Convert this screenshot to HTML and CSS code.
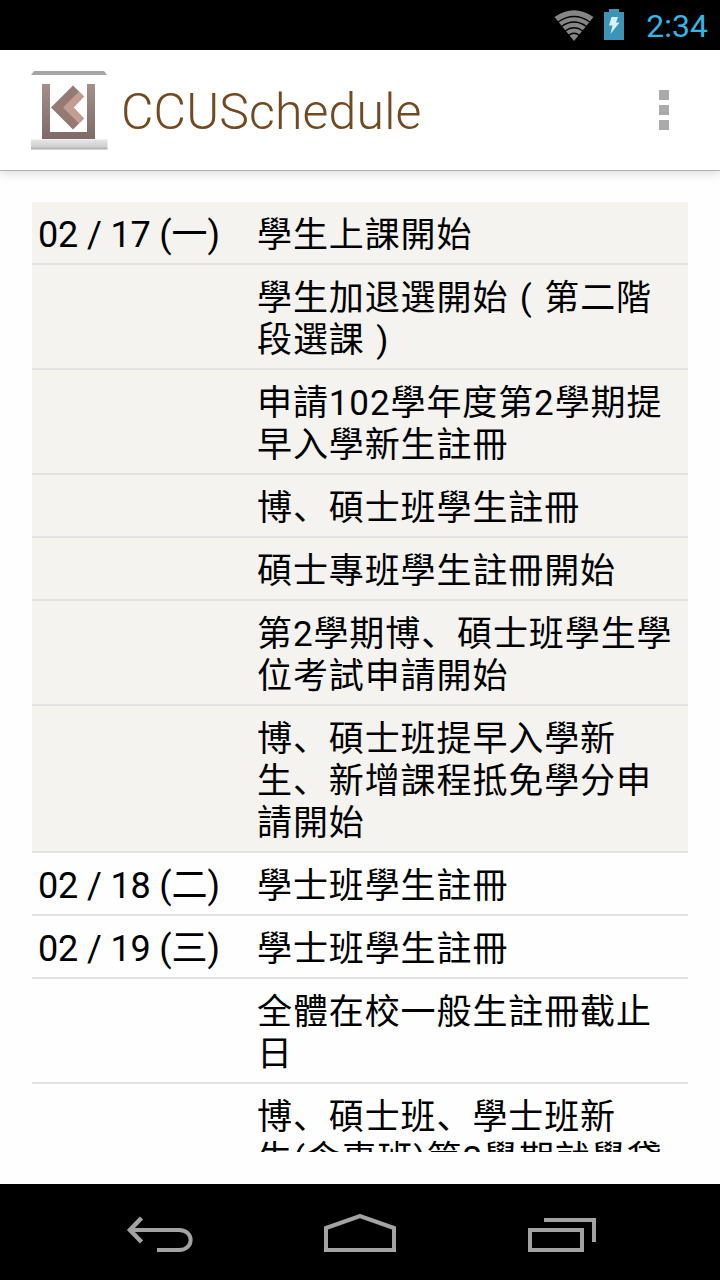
FILE: index.html
```html
<!DOCTYPE html>
<html lang="zh-Hans">
<head>
    <meta charset="UTF-8">
    <meta name="viewport" content="width=device-width, initial-scale=1.0">
    <title>CCUSchedule</title>
    <link rel="stylesheet" href="styles.css">
</head>
<body>
    <div class="status-bar">
        <svg class="wifi" width="40" height="31" viewBox="0 0 40 31">
            <path d="M0.5 7 Q20 -6.500 39.500 7 L20 31 Z" fill="#858585"/>
            <g fill="none" stroke="#000" stroke-width="1.300">
                <path d="M4 12 Q20 1 36 12"/>
                <path d="M7.500 16.500 Q20 7.500 32.500 16.500"/>
                <path d="M11 21 Q20 14.500 29 21"/>
                <path d="M14.500 25.500 Q20 21 25.500 25.500"/>
            </g>
        </svg>
        <svg class="battery" width="20" height="31" viewBox="0 0 20 31">
            <path d="M5 0h10v3h5v28H0V3h5z" fill="#3d94b5"/>
            <path d="M7.500 8h6.500l-2 5.500h3.500L6.500 25l2-8.500H5z" fill="#d5f2fc"/>
        </svg>
        <span class="clock">2:34</span>
    </div>

    <header class="action-bar">
        <svg class="logo" width="80" height="80" viewBox="0 0 80 80">
            <defs>
                <linearGradient id="frame" x1="0" y1="0" x2="0" y2="1">
                    <stop offset="0" stop-color="#a48f89"/>
                    <stop offset="1" stop-color="#806a65"/>
                </linearGradient>
                <linearGradient id="base" x1="0" y1="0" x2="0" y2="1">
                    <stop offset="0" stop-color="#e6e6e6"/>
                    <stop offset="0.700" stop-color="#d0d0d0"/>
                    <stop offset="1" stop-color="#a9a9a9"/>
                </linearGradient>
            </defs>
            <path d="M4 1h70l3 4H1z" fill="#a5a5a5"/>
            <path d="M12 14h8v48h37V14h8v55H12z" fill="url(#frame)"/>
            <path d="M43 15.500 54 26.500 43.500 37.500 54 48.500 43 59.500 21 37.500z" fill="#957a73"/>
            <path d="M49 21.500 54 26.500 43.500 37.500 54 48.500 49 53.500 33 37.500z" fill="#c39d91"/>
            <path d="M1 69.500h76.500v10H1z" fill="url(#base)"/>
        </svg>
        <h1>CCUSchedule</h1>
        <button class="menu"><i></i><i></i><i></i></button>
    </header>

    <main class="content">
        <div class="schedule">
            <div class="row shaded"><span class="date">02 / 17 (一)</span><p>學生上課開始</p></div>
            <div class="row shaded"><span class="date"></span><p>學生加退選開始<span class="paren">(</span>第二階<br>段選課<span class="paren">)</span></p></div>
            <div class="row shaded"><span class="date"></span><p>申請102學年度第2學期提<br>早入學新生註冊</p></div>
            <div class="row shaded"><span class="date"></span><p>博、碩士班學生註冊</p></div>
            <div class="row shaded"><span class="date"></span><p>碩士專班學生註冊開始</p></div>
            <div class="row shaded"><span class="date"></span><p>第2學期博、碩士班學生學<br>位考試申請開始</p></div>
            <div class="row shaded"><span class="date"></span><p>博、碩士班提早入學新<br>生、新增課程抵免學分申<br>請開始</p></div>
            <div class="row"><span class="date">02 / 18 (二)</span><p>學士班學生註冊</p></div>
            <div class="row"><span class="date">02 / 19 (三)</span><p>學士班學生註冊</p></div>
            <div class="row"><span class="date"></span><p>全體在校一般生註冊截止<br>日</p></div>
            <div class="row"><span class="date"></span><p>博、碩士班、學士班新<br>生(含專班)第2學期就學貸</p></div>
        </div>
    </main>

    <nav class="nav-bar">
        <svg width="68" height="36" viewBox="0 0 68 36" fill="none" stroke="#a3a3a3" stroke-width="4">
            <path d="M15.500 2 4 14 15.500 26" stroke-width="4.500"/>
            <path d="M5 14H53C68.500 14 68.500 34 53 34H31"/>
        </svg>
        <svg width="72" height="38" viewBox="0 0 72 38" fill="none" stroke="#a3a3a3" stroke-width="4">
            <path d="M2 36V14L36 2 70 14V36Z"/>
        </svg>
        <svg width="68" height="34" viewBox="0 0 68 34" fill="none" stroke="#a3a3a3" stroke-width="4">
            <path d="M2 12H54V32H2Z"/>
            <path d="M16 2H66V24"/>
        </svg>
    </nav>
</body>
</html>
```

FILE: styles.css
```css
* {
    box-sizing: border-box;
}
body {
    margin: 0;
    width: 720px;
    height: 1280px;
    display: flex;
    flex-direction: column;
    overflow: hidden;
    background-color: #fefefe;
    color: #000;
    font-family: Roboto, "Noto Sans CJK SC", sans-serif;
}
.status-bar {
    height: 50px;
    display: flex;
    align-items: center;
    justify-content: flex-end;
    padding-right: 12px;
    background-color: #000;
}
.wifi {
    margin-right: 1px;
}
.battery {
    margin: 0 22px 2px 9px;
}
.clock {
    font-size: 32px;
    line-height: 50px;
    color: #33b5e5;
    padding-top: 2px;
}
.action-bar {
    height: 121px;
    display: flex;
    align-items: center;
    padding: 0 51px 0 30px;
    background-color: #fff;
    border-bottom: 1px solid #b0b0b0;
    box-shadow: 0 2px 10px rgba(0, 0, 0, 0.15);
}
.action-bar h1 {
    margin: 0 auto 0 11px;
    padding-top: 3px;
    font-size: 50px;
    font-weight: 300;
    letter-spacing: 0.15px;
    color: #73491f;
}
.menu {
    display: flex;
    flex-direction: column;
    gap: 5px;
    padding: 0;
    border: none;
    background: none;
}
.menu i {
    width: 10px;
    height: 10px;
    background-color: #aaa;
}
.content {
    height: 1013px;
    padding: 31px 32px 32px;
}
.schedule {
    height: 950px;
    overflow: hidden;
}
.row {
    display: flex;
    padding: 12px 6px 6px;
    border-bottom: 2px solid #e2e2e2;
    font-size: 36px;
    line-height: 42px;
}
.row.shaded {
    background-color: #f4f3f0;
}
.date {
    width: 219px;
    flex-shrink: 0;
    letter-spacing: -0.15px;
}
.row p {
    margin: 1px 0 0;
    font-size: 35px;
    letter-spacing: 0.9px;
    white-space: nowrap;
}
.paren {
    display: inline-block;
    width: 36px;
    text-align: center;
}
.nav-bar {
    height: 96px;
    display: flex;
    align-items: flex-end;
    padding: 0 0 28px 126px;
    background-color: #000;
}
.nav-bar svg {
    margin-right: 130px;
    flex-shrink: 0;
}
.nav-bar svg + svg {
    margin-right: 132px;
}
```
